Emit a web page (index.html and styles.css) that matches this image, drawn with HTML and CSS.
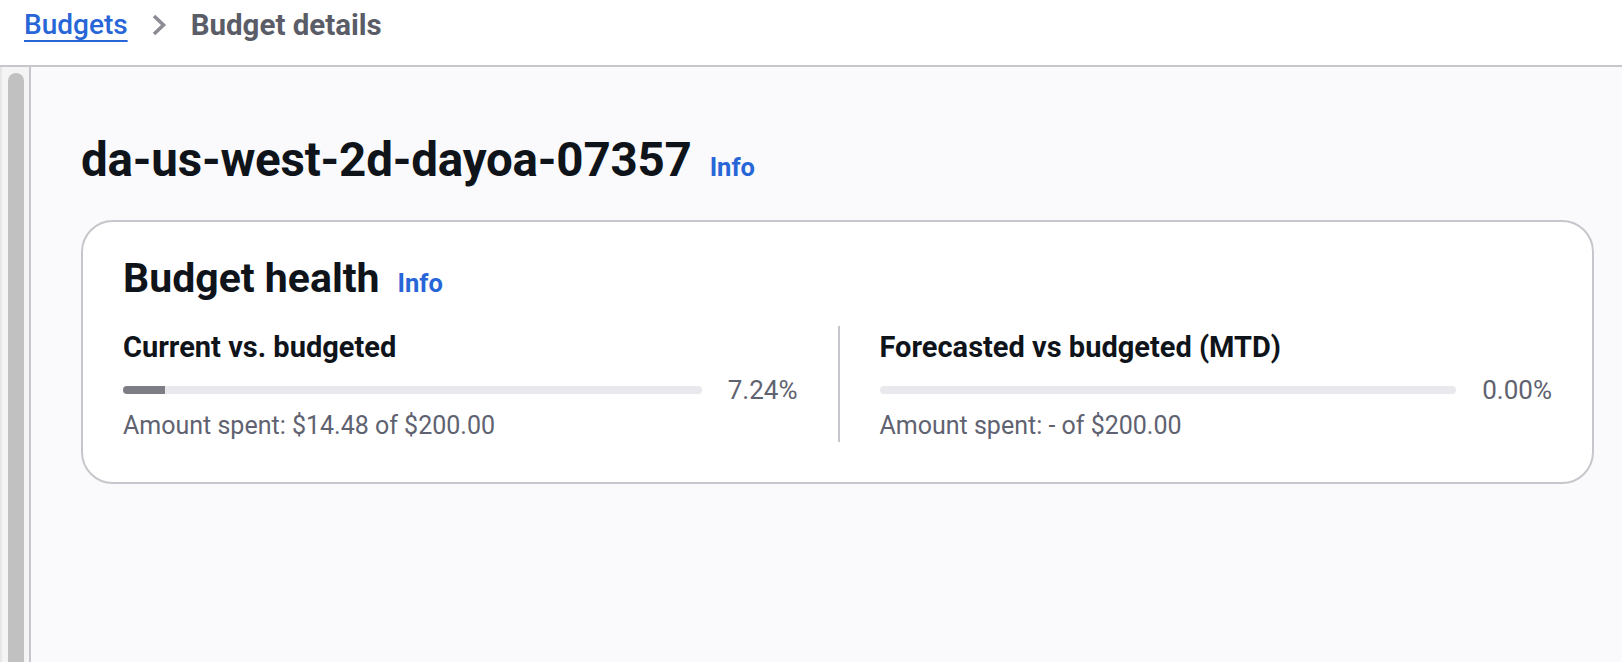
FILE: index.html
```html
<!DOCTYPE html>
<html lang="en">
<head>
<meta charset="utf-8">
<title>Budget details</title>
<link rel="stylesheet" href="styles.css">
</head>
<body>
<header class="topbar">
  <nav class="breadcrumbs">
    <a class="crumb-link" href="#">Budgets</a>
    <svg class="crumb-sep" width="16" height="24" viewBox="0 0 16 24" aria-hidden="true"><path d="M3 3 L12.5 12 L3 21" fill="none" stroke="#8c8c94" stroke-width="3.6" stroke-linecap="butt" stroke-linejoin="miter"/></svg>
    <span class="crumb-current">Budget details</span>
  </nav>
</header>
<div class="frame">
  <div class="rail"><div class="thumb"></div></div>
  <main class="content">
    <div class="page-head">
      <h1 class="page-title">da-us-west-2d-dayoa-07357</h1>
      <a class="info" href="#">Info</a>
    </div>
    <section class="card">
      <div class="card-head">
        <h2 class="card-title">Budget health</h2>
        <a class="info" href="#">Info</a>
      </div>
      <div class="columns">
        <div class="col">
          <div class="label">Current vs. budgeted</div>
          <div class="progress">
            <div class="track"><div class="fill" style="width:7.24%"></div></div>
            <div class="pct">7.24%</div>
          </div>
          <div class="desc">Amount spent: $14.48 of $200.00</div>
        </div>
        <div class="col col-right">
          <div class="label">Forecasted vs budgeted (MTD)</div>
          <div class="progress">
            <div class="track"><div class="fill" style="width:0%"></div></div>
            <div class="pct">0.00%</div>
          </div>
          <div class="desc">Amount spent: - of $200.00</div>
        </div>
      </div>
    </section>
  </main>
</div>
</body>
</html>
```
FILE: styles.css
```css
* { box-sizing: border-box; }
html, body { margin: 0; padding: 0; }
body {
  font-family: Roboto, "Liberation Sans", sans-serif;
  color: #0f141a;
  background: #ffffff;
  height: 662px;
  overflow: hidden;
}
.topbar {
  height: 67px;
  background: #ffffff;
  border-bottom: 2px solid #c6c6cd;
  padding: 7px 0 0 24px;
}
.breadcrumbs {
  display: flex;
  align-items: center;
  height: 36px;
  font-size: 28px;
  line-height: 36px;
}
.crumb-link {
  color: #2866d8;
  text-decoration: underline;
  text-decoration-thickness: 2px;
  text-underline-offset: 6px;
  font-weight: 500;
}
.crumb-sep {
  margin: 0 24px 0 23px;
  flex: none;
}
.crumb-current {
  color: #5a5d67;
  font-weight: 700;
  font-size: 29.5px;
}
.frame {
  display: flex;
  height: 595px;
}
.rail {
  width: 31px;
  flex: none;
  display: flex;
  background: #f4f4f4;
  border-left: 2px solid #e6e6e6;
  border-right: 2px solid #c6c6cd;
  padding: 6px 5px 0 6px;
}
.thumb {
  flex: 1;
  background: #c1c1c1;
  border-radius: 8px 8px 0 0;
}
.content {
  flex: 1;
  background: #fafafc;
  padding: 63px 28px 0 50px;
}
.page-head {
  display: flex;
  align-items: baseline;
  gap: 18px;
  height: 60px;
}
.page-title {
  margin: 0;
  font-size: 47.5px;
  line-height: 60px;
  font-weight: 700;
  letter-spacing: -0.2px;
}
.info {
  color: #2866d8;
  font-weight: 700;
  font-size: 25.5px;
  text-decoration: none;
}
.card {
  margin-top: 30px;
  background: #ffffff;
  border: 2px solid #c6c6cd;
  border-radius: 32px;
  padding: 31px 40px 40px 40px;
}
.card-head {
  display: flex;
  align-items: baseline;
  gap: 18px;
  height: 50px;
}
.card-title {
  margin: 0;
  font-size: 41px;
  line-height: 50px;
  font-weight: 700;
}
.columns {
  margin-top: 23px;
  display: grid;
  grid-template-columns: 1fr 1fr;
}
.col {
  padding-right: 40px;
}
.col-right {
  border-left: 2px solid #c6c6cd;
  padding: 0 0 0 40px;
}
.label {
  margin-top: 3px;
  font-size: 29px;
  line-height: 36px;
  font-weight: 700;
}
.progress {
  margin-top: 7px;
  display: flex;
  align-items: center;
  height: 36px;
}
.track {
  flex: 1;
  height: 8px;
  border-radius: 4px;
  background: #e9e9ed;
  overflow: hidden;
}
.fill {
  height: 100%;
  background: #7d7d86;
}
.pct {
  width: 96px;
  flex: none;
  text-align: right;
  font-size: 26px;
  line-height: 36px;
  color: #5f6270;
}
.desc {
  margin-top: 2px;
  font-size: 25px;
  line-height: 32px;
  color: #5f6270;
}
```
